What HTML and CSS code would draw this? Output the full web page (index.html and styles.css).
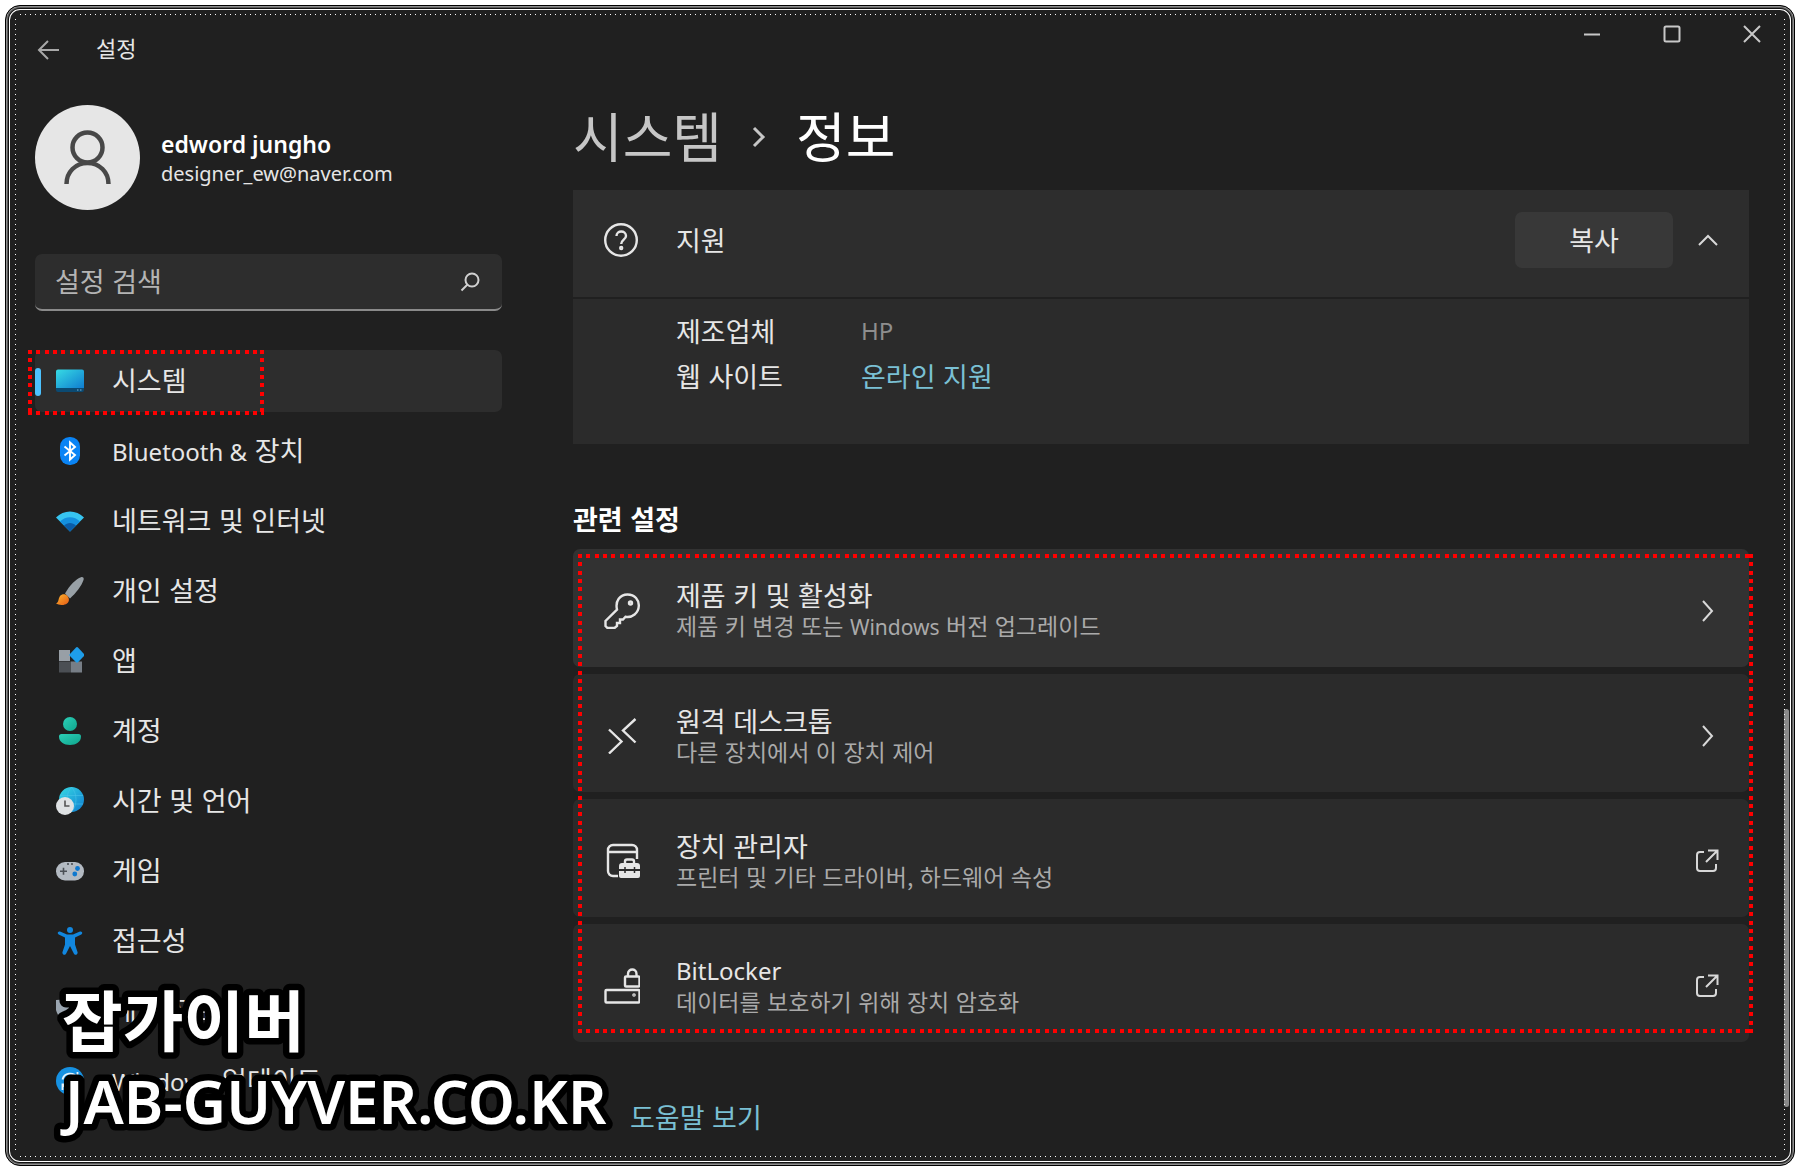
FILE: index.html
```html
<!DOCTYPE html>
<html lang="ko">
<head>
  <meta charset="UTF-8" />
  <title>설정</title>
  <link rel="stylesheet" href="styles.css">
</head>
<body>
  <div class="window">
    <!-- 제목 표시줄 -->
    <header class="titlebar">
      <button type="button" class="back" aria-label="뒤로">
        <svg width="24" height="22" viewBox="0 0 24 22"><path d="M22 11H2M11 2L2 11l9 9" /></svg>
      </button>
      <span class="app-name">설정</span>
      <div class="controls">
        <button type="button" aria-label="최소화"><svg width="18" height="18" viewBox="0 0 18 18"><path d="M1 9.500h16" /></svg></button>
        <button type="button" aria-label="최대화"><svg width="18" height="18" viewBox="0 0 18 18"><rect x="1.500" y="1.500" width="15" height="15" rx="1.500" /></svg></button>
        <button type="button" aria-label="닫기"><svg width="18" height="18" viewBox="0 0 18 18"><path d="M1 1l16 16M17 1L1 17" /></svg></button>
      </div>
    </header>

    <div class="content">
      <aside class="sidebar">
        <div class="profile">
          <svg class="avatar" viewBox="0 0 105 105">
            <circle cx="52.500" cy="52.500" r="52.500" fill="#e6e6e6" />
            <g fill="none" stroke="#484848" stroke-width="4.500"><circle cx="52.500" cy="42.500" r="15" /><path d="M31.500 79c0-12 9-21 21-21s21 9 21 21" /></g>
          </svg>
          <div class="user">
            <div class="user-name">edword jungho</div>
            <div class="user-mail">designer_ew@naver.com</div>
          </div>
        </div>

        <div class="search">
          <input type="text" placeholder="설정 검색" aria-label="설정 검색">
          <svg width="20" height="20" viewBox="0 0 20 20"><circle cx="12" cy="8" r="6.500" /><path d="M7.500 12.500L1.500 18.500" /></svg>
        </div>

        <nav class="menu">
          <a href="#" class="active">
            <svg viewBox="0 0 28 28">
              <defs><linearGradient id="gScreen" x1="0" y1="0" x2="1" y2="1"><stop offset="0" stop-color="#37dbe4" /><stop offset="1" stop-color="#0f7cd0" /></linearGradient></defs>
              <path d="M0 4.500a2 2 0 0 1 2-2h24a2 2 0 0 1 2 2v17H0z" fill="url(#gScreen)" />
              <path d="M0 21h28v2a2 2 0 0 1-2 2H2a2 2 0 0 1-2-2z" fill="#0b4a72" />
              <path d="M21 23h1.500M24 23h1.500" stroke="#7ab4d8" stroke-width="1.200" />
            </svg>
            <span>시스템</span>
          </a>
          <a href="#">
            <svg viewBox="0 0 28 28"><rect x="4" y="0" width="20" height="28" rx="9.500" fill="#0a84f5" /><path d="M8.500 9.500L19 18l-5 4.500v-17l5 4.500-10.500 8.500" fill="none" stroke="#fff" stroke-width="1.900" /></svg>
            <span><span class="en">Bluetooth &amp;</span> 장치</span>
          </a>
          <a href="#">
            <svg viewBox="0 0 28 28">
              <path d="M14 24.500L0 10.500C7.500 2.500 20.500 2.500 28 10.500z" fill="#37c5f1" />
              <path d="M14 24.500L4 14.500c5.500-5.800 14.500-5.800 20 0z" fill="#1490df" />
              <path d="M14 24.500l-6-6c3.500-3.500 8.500-3.500 12 0z" fill="#0a5ca8" />
            </svg>
            <span>네트워크 및 인터넷</span>
          </a>
          <a href="#">
            <svg viewBox="0 0 28 28">
              <defs><linearGradient id="gBrush" x1="0" y1="0" x2="1" y2="1"><stop offset="0" stop-color="#ffb72e" /><stop offset="1" stop-color="#e55b16" /></linearGradient></defs>
              <path d="M9 16.500C14 8 20 2 25 .3c2-.7 3.200.8 2.500 2.700C25.500 9 20 16 14 21.500z" fill="#98a0a6" />
              <path d="M0 26.500c3-1 2-4.500 4-7.500 2-2.500 5.500-2.500 7.500 0s2 5.500-.5 7.500c-3 2.200-8 1.800-11 0z" fill="url(#gBrush)" />
            </svg>
            <span>개인 설정</span>
          </a>
          <a href="#">
            <svg viewBox="0 0 28 28">
              <path d="M3 3h11v11H3z" fill="#989fa6" /><path d="M3 14.500h11v11H3z" fill="#4b4f54" /><path d="M14.500 14.500H26v11H14.500z" fill="#777e86" />
              <path d="M13 8l7-7.500q1-.8 2 0L28 7q.8 1 0 2l-6 6.300q-1 .8-2 0z" fill="#1e9de9" />
            </svg>
            <span>앱</span>
          </a>
          <a href="#">
            <svg viewBox="0 0 28 28">
              <defs><linearGradient id="gUser" x1="0" y1="0" x2="1" y2="1"><stop offset="0" stop-color="#2cd0b8" /><stop offset="1" stop-color="#0fa58c" /></linearGradient></defs>
              <circle cx="14" cy="7" r="7" fill="url(#gUser)" /><path d="M5.500 17h17a2.500 2.500 0 0 1 2.500 2.500C25 25 20 28 14 28S3 25 3 19.500A2.500 2.500 0 0 1 5.500 17z" fill="url(#gUser)" />
            </svg>
            <span>계정</span>
          </a>
          <a href="#">
            <svg viewBox="0 0 28 28">
              <circle cx="15.500" cy="12.500" r="12.500" fill="url(#gScreen)" />
              <path d="M4 8.500h23M4 17h23M15.500 0c-6 7-6 18 0 25M15.500 0c6 7 6 18 0 25" fill="none" stroke="#48c3ea" stroke-width="1" opacity=".6" />
              <circle cx="9" cy="19" r="9" fill="#dfe2e4" /><path d="M9 13.500V19h4.500" fill="none" stroke="#555" stroke-width="1.600" />
            </svg>
            <span>시간 및 언어</span>
          </a>
          <a href="#">
            <svg viewBox="0 0 28 28">
              <rect x="0" y="5" width="28" height="18.500" rx="9" fill="#b3bac2" />
              <path d="M4 14.200h7M7.500 10.700v7M12 6v2M16 6v2" stroke="#4a4f55" stroke-width="1.600" />
              <circle cx="21.500" cy="11.500" r="2.400" fill="#0e78cf" /><circle cx="18.800" cy="17" r="2.400" fill="#0e78cf" />
            </svg>
            <span>게임</span>
          </a>
          <a href="#">
            <svg viewBox="0 0 28 28">
              <g fill="#1287df"><circle cx="14" cy="3" r="3" /><path d="M4 4.500L11 7.500h6l7-3c2-.7 3.200 2 1.300 3L19 10.500v7l2.500 7.500c.7 2.500-2.600 3.800-3.700 1.500L14 19l-3.800 7.500c-1.100 2.300-4.400 1-3.700-1.500L9 17.500v-7L2.700 7.500C.8 6.500 2 3.800 4 4.500z" /></g>
            </svg>
            <span>접근성</span>
          </a>
          <a href="#">
            <svg viewBox="0 0 28 28"><path d="M14 0c4 3 8 4 12 4v9c0 7-5 12-12 15C7 25 2 20 0 13V3c5 0 10-1 14-3z" fill="#9aa5b0" /></svg>
            <span>개인 정보 보호</span>
          </a>
          <a href="#">
            <svg viewBox="0 0 28 28"><circle cx="14" cy="14" r="14" fill="#1691e2" /><path d="M6.500 12.500c1.500-7 11-8 14.500-2M21.500 5v5.500H16M21.500 15.500c-1.500 7-11 8-14.500 2M6.500 23v-5.500H12" fill="none" stroke="#e8f4fc" stroke-width="1.800" /></svg>
            <span><span class="en">Windows</span> 업데이트</span>
          </a>
        </nav>
      </aside>

      <main class="main">
        <h1><a href="#">시스템</a><svg width="14" height="22" viewBox="0 0 14 22"><path d="M2 2l9 9-9 9" /></svg><span>정보</span></h1>

        <section class="support">
          <div class="support-head">
            <svg class="row-icon" viewBox="0 0 36 36"><circle cx="17" cy="18" r="15.800" /><path d="M12.500 14c0-6 9.500-6 9.500 0 0 3.500-4.800 4-4.800 8" /><circle cx="17.200" cy="26" r="1" /></svg>
            <span class="support-title">지원</span>
            <button type="button" class="copy">복사</button>
            <button type="button" class="fold" aria-label="접기"><svg width="22" height="14" viewBox="0 0 22 14"><path d="M2 12l9-9 9 9" /></svg></button>
          </div>
          <dl class="support-body">
            <dt>제조업체</dt><dd class="en">HP</dd>
            <dt>웹 사이트</dt><dd><a href="#">온라인 지원</a></dd>
          </dl>
        </section>

        <h2>관련 설정</h2>
        <div class="cards">
          <a href="#" class="card hover">
            <svg class="row-icon" viewBox="0 0 36 36"><path d="M13 16.500C11 8 16 1.500 23.500 1.500S35 7 34.800 13c-.3 7-6.500 12-13.300 10.800L19 26.500h-3v3.500h-3v3l-2.500 2H3.500L1.500 33v-5z" /><circle cx="26.500" cy="10" r="1.500" /></svg>
            <span class="card-text"><b>제품 키 및 활성화</b><small>제품 키 변경 또는 <span class="en">Windows</span> 버전 업그레이드</small></span>
            <svg class="arrow" viewBox="0 0 24 24"><path d="M8 2l9 10-9 10" /></svg>
          </a>
          <a href="#" class="card">
            <svg class="row-icon" viewBox="0 0 36 36"><path d="M5 11.500L17.500 23.500 5 35.500M31.500 1L19 12.500l12.500 12" /></svg>
            <span class="card-text"><b>원격 데스크톱</b><small>다른 장치에서 이 장치 제어</small></span>
            <svg class="arrow" viewBox="0 0 24 24"><path d="M8 2l9 10-9 10" /></svg>
          </a>
          <a href="#" class="card">
            <svg class="row-icon" viewBox="0 0 36 36">
              <path d="M14 33H9a5 5 0 0 1-5-5V7a5 5 0 0 1 5-5h19a5 5 0 0 1 5 5v9M4 9h29" />
              <path d="M21 21v-2.500a2 2 0 0 1 2-2h5a2 2 0 0 1 2 2V21" />
              <path class="solid" d="M18 20h15a3 3 0 0 1 3 3v3H15v-3a3 3 0 0 1 3-3zM15 28h21v5a2 2 0 0 1-2 2H17a2 2 0 0 1-2-2z" />
              <path class="cut" d="M21 24v6M30.500 24v6" />
            </svg>
            <span class="card-text"><b>장치 관리자</b><small>프린터 및 기타 드라이버, 하드웨어 속성</small></span>
            <svg class="arrow" viewBox="0 0 24 24"><path d="M9 3H5a3 3 0 0 0-3 3v13a3 3 0 0 0 3 3h13a3 3 0 0 0 3-3v-4M13 1.500h9.500V11M22 2L11 13" /></svg>
          </a>
          <a href="#" class="card">
            <svg class="row-icon" viewBox="0 0 36 36"><rect x="1.500" y="22" width="34" height="12.500" rx="1" /><rect x="21" y="8.500" width="14.500" height="10" rx="1" /><path d="M24 8.500V6c0-6 8.500-6 8.500 0v2.500" /><circle cx="30" cy="27" r=".6" /></svg>
            <span class="card-text"><b class="en">BitLocker</b><small>데이터를 보호하기 위해 장치 암호화</small></span>
            <svg class="arrow" viewBox="0 0 24 24"><path d="M9 3H5a3 3 0 0 0-3 3v13a3 3 0 0 0 3 3h13a3 3 0 0 0 3-3v-4M13 1.500h9.500V11M22 2L11 13" /></svg>
          </a>
          <div class="mark mark-cards"></div>
        </div>

        <a href="#" class="help">
          <svg width="32" height="32" viewBox="0 0 32 32"><path d="M16 17l4 8 7 4-4-12z" /></svg>
          <span>도움말 보기</span>
        </a>
      </main>
    </div>

    <div class="mark mark-menu"></div>
    <div class="scrollbar"></div>
    <svg class="watermark" width="600" height="165">
      <text class="watermark-ko" x="10" y="66">잡가이버</text>
      <text class="watermark-en" x="13" y="144">JAB-GUYVER.CO.KR</text>
    </svg>
  </div>
</body>
</html>
```

FILE: styles.css
```css
* {
  box-sizing: border-box;
}
body {
  margin: 0;
  background: #fff;
  color: #e6e6e6;
  font-family: "Noto Sans CJK KR", sans-serif;
  font-size: 27px;
}
a {
  color: inherit;
  text-decoration: none;
}
button {
  padding: 0;
  border: 0;
  background: none;
  color: inherit;
  font: inherit;
}
svg {
  display: block;
  flex: none;
  fill: none;
}
.en {
  font-family: "Noto Sans", "Noto Sans CJK KR", sans-serif;
  font-size: 24px;
}

/* 창 테두리 */
.window {
  position: relative;
  min-height: calc(100vh - 10px);
  margin: 5px;
  border: 1px solid #000;
  border-radius: 15px;
  background: #202020;
  box-shadow: inset 0 0 0 1px #8f8f8f, inset 0 0 0 2px #5a5a5a, inset 0 0 0 3px #111, inset 0 0 0 4px #fff;
}
.window::after {
  content: "";
  position: absolute;
  inset: 8px 9px;
  pointer-events: none;
  background:
    repeating-linear-gradient(90deg, #fff 0 1px, transparent 1px 5px) 5px 0 / calc(100% - 10px) 1px no-repeat,
    repeating-linear-gradient(90deg, #fff 0 1px, transparent 1px 5px) 5px 100% / calc(100% - 10px) 1px no-repeat,
    repeating-linear-gradient(#fff 0 1px, transparent 1px 5px) 0 5px / 1px calc(100% - 10px) no-repeat,
    repeating-linear-gradient(#fff 0 1px, transparent 1px 5px) 100% 5px / 1px calc(100% - 10px) no-repeat;
}

/* 제목 표시줄 */
.titlebar {
  display: flex;
  height: 74px;
  padding: 0 33px 0 31px;
}
.back {
  height: 88px;
}
.back svg {
  stroke: #a8a8a8;
  stroke-width: 2;
}
.app-name {
  margin-left: 35px;
  font-size: 22px;
  line-height: 83px;
}
.controls {
  display: flex;
  gap: 62px;
  height: 56px;
  margin-left: auto;
}
.controls svg {
  stroke: #c8c8c8;
  stroke-width: 2;
}

.content {
  display: grid;
  grid-template-columns: 467px 1fr;
  gap: 71px;
  padding: 0 45px 0 29px;
}

/* 왼쪽 메뉴 */
.profile {
  display: flex;
  align-items: center;
  gap: 21px;
  margin-top: 25px;
}
.avatar {
  width: 105px;
  height: 105px;
}
.user {
  padding-top: 3px;
  font-family: "Noto Sans", sans-serif;
  line-height: 30px;
}
.user-name {
  color: #fff;
  font-size: 23px;
  font-weight: 600;
}
.user-mail {
  font-size: 20px;
}
.search {
  display: flex;
  align-items: center;
  height: 57px;
  margin-top: 44px;
  padding: 0 22px 0 20px;
  border-bottom: 2px solid #8a8a8a;
  border-radius: 7px;
  background: #2d2d2d;
}
.search input {
  flex: 1;
  min-width: 0;
  padding: 0 0 2px;
  border: 0;
  outline: 0;
  background: none;
  color: #fff;
  font: inherit;
}
.search input::placeholder {
  color: #b4b4b4;
}
.search svg {
  stroke: #d0d0d0;
  stroke-width: 2;
}
.menu {
  display: grid;
  gap: 8px;
  margin-top: 39px;
}
.menu a {
  position: relative;
  display: flex;
  align-items: center;
  gap: 28px;
  height: 62px;
  padding-left: 21px;
  border-radius: 7px;
}
.menu a > span {
  padding-bottom: 3px;
}
.menu svg {
  width: 28px;
  height: 28px;
}
.menu .active {
  background: #2d2d2d;
}
.menu .active::before {
  content: "";
  position: absolute;
  left: 0;
  top: 18px;
  width: 6px;
  height: 28px;
  border-radius: 3px;
  background: #4cc2ff;
}

/* 본문 */
h1 {
  display: flex;
  align-items: center;
  gap: 30px;
  height: 60px;
  margin: 27px 0 23px;
  color: #fff;
  font-size: 54px;
  font-weight: 400;
  line-height: 60px;
}
h1 a,
h1 span {
  padding-bottom: 5px;
}
h1 a {
  color: #c6c6c6;
}
h1 svg {
  stroke: #c6c6c6;
  stroke-width: 3;
}
.support {
  background: #2b2b2b;
}
.support-head {
  display: flex;
  align-items: center;
  height: 109px;
  padding: 0 30px 8px 31px;
  border-bottom: 2px solid #202020;
  background: #2d2d2d;
}
.row-icon {
  width: 36px;
  height: 36px;
  stroke: #e6e6e6;
  stroke-width: 2.4;
}
.support-title {
  flex: 1;
  margin-left: 36px;
}
.copy {
  width: 158px;
  height: 56px;
  border-radius: 7px;
  background: #383838;
}
.fold {
  margin-left: 24px;
}
.fold svg {
  stroke: #d8d8d8;
  stroke-width: 2;
}
.support-body {
  display: grid;
  grid-template-columns: 185px 1fr;
  line-height: 45px;
  height: 145px;
  margin: 0;
  padding: 9px 0 46px 103px;
}
.support-body dd {
  margin: 0;
}
.support-body dd.en {
  color: #8e8e8e;
}
.support-body a,
.help {
  color: #7ac0d4;
}
h2 {
  margin: 59px 0 14px;
  color: #fff;
  font-size: 27px;
  font-weight: 700;
  line-height: 32px;
}
.cards {
  position: relative;
  display: grid;
  gap: 7px;
}
.card {
  display: flex;
  align-items: center;
  height: 118px;
  padding: 5px 30px 0 31px;
  border-radius: 7px;
  background: #2b2b2b;
}
.card.hover {
  background: #323232;
}
.card-text {
  display: grid;
  flex: 1;
  margin-left: 36px;
  line-height: 30px;
}
.card-text b {
  font-weight: 400;
}
.card-text small {
  color: #aaa;
  font-size: 23px;
}
.card-text small .en {
  font-size: 21px;
}
.arrow {
  width: 24px;
  height: 24px;
  stroke: #d8d8d8;
  stroke-width: 2;
}
.solid {
  fill: #e6e6e6;
  stroke: none;
}
.cut {
  stroke: #2b2b2b;
  stroke-width: 1.5;
}
.help {
  display: flex;
  gap: 25px;
  width: max-content;
  margin-top: 57px;
  line-height: 36px;
}
.help svg {
  fill: #e6e6e6;
}

/* 빨간 점선 강조 */
.mark {
  --dots: red 0 4px, transparent 4px 8px, red 8px 12px, transparent 12px 17px, red 17px 21px, transparent 21px 25px;
  position: absolute;
  pointer-events: none;
  background:
    repeating-linear-gradient(90deg, var(--dots)) 0 0 / 100% 4px no-repeat,
    repeating-linear-gradient(90deg, var(--dots)) 0 100% / 100% 4px no-repeat,
    repeating-linear-gradient(var(--dots)) 0 0 / 4px 100% no-repeat,
    repeating-linear-gradient(var(--dots)) 100% 0 / 4px 100% no-repeat;
}
.mark-cards {
  inset: 5px -4px 9px 5px;
}
.mark-menu {
  left: 22px;
  top: 344px;
  width: 236px;
  height: 65px;
}
.scrollbar {
  position: absolute;
  top: 703px;
  right: 5px;
  bottom: 58px;
  width: 5px;
  border-radius: 3px;
  background: #8a8a8a;
}

/* 워터마크 */
.watermark {
  position: absolute;
  left: 46px;
  bottom: 20px;
  overflow: visible;
  fill: #fff;
  stroke: #000;
  stroke-width: 13;
  stroke-linejoin: round;
  paint-order: stroke;
  font-weight: 700;
  pointer-events: none;
}
.watermark-ko {
  font-size: 66px;
}
.watermark-en {
  font-family: "Noto Sans", sans-serif;
  font-size: 60px;
  font-weight: 600;
}
```
